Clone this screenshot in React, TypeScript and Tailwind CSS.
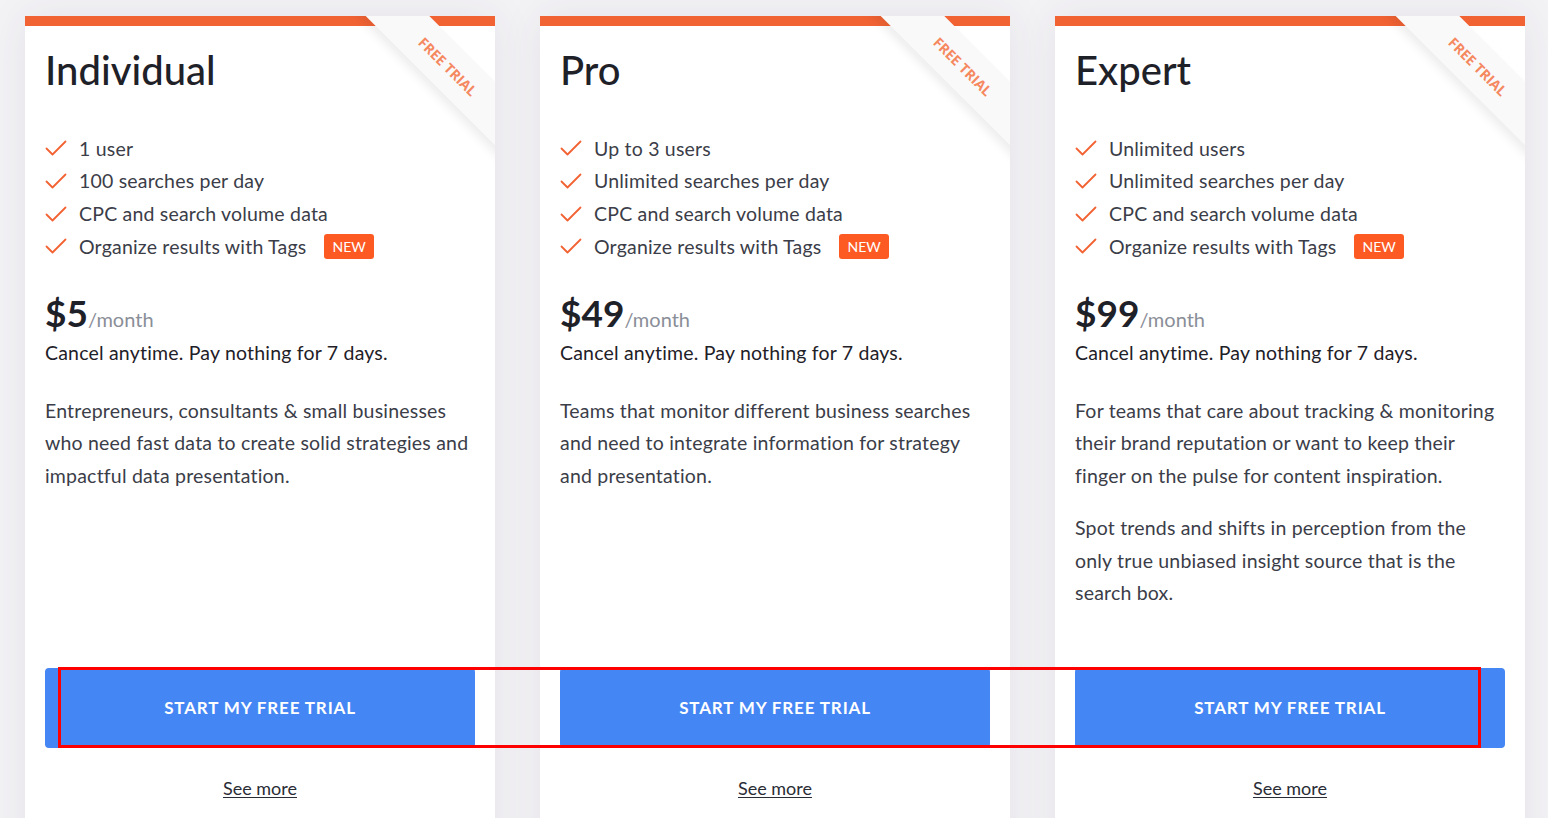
import React from 'react';

interface Plan {
  name: string;
  features: string[];
  price: string;
  paragraphs: string[];
}

const plans: Plan[] = [
  {
    name: 'Individual',
    features: ['1 user', '100 searches per day', 'CPC and search volume data', 'Organize results with Tags'],
    price: '$5',
    paragraphs: [
      'Entrepreneurs, consultants & small businesses who need fast data to create solid strategies and impactful data presentation.',
    ],
  },
  {
    name: 'Pro',
    features: ['Up to 3 users', 'Unlimited searches per day', 'CPC and search volume data', 'Organize results with Tags'],
    price: '$49',
    paragraphs: [
      'Teams that monitor different business searches and need to integrate information for strategy and presentation.',
    ],
  },
  {
    name: 'Expert',
    features: ['Unlimited users', 'Unlimited searches per day', 'CPC and search volume data', 'Organize results with Tags'],
    price: '$99',
    paragraphs: [
      'For teams that care about tracking & monitoring their brand reputation or want to keep their finger on the pulse for content inspiration.',
      'Spot trends and shifts in perception from the only true unbiased insight source that is the search box.',
    ],
  },
];

const Check = () => (
  <svg width="22" height="16" viewBox="0 0 22 16" fill="none" className="shrink-0">
    <path d="M1.5 8.5 L7.5 14.5 L20.5 1.5" stroke="#f26334" strokeWidth="1.8" strokeLinecap="round" strokeLinejoin="round" />
  </svg>
);

const PlanCard: React.FC<{ plan: Plan }> = ({ plan }) => (
  <div className="relative flex flex-col overflow-hidden bg-white shadow-[0_0_40px_rgba(60,50,80,0.08)]">
    <div className="h-[10px] bg-[#f26334]" />

    {/* corner ribbon */}
    <div className="absolute left-[303px] top-[28px] flex h-[45px] w-[240px] rotate-45 items-center justify-center bg-[#f9f9fa] shadow-[0_6px_10px_rgba(0,0,0,0.07)]">
      <span className="font-['Open_Sans',sans-serif] text-[14px] font-bold uppercase text-[#f5885f]">
        Free Trial
      </span>
    </div>

    <div className="flex flex-1 flex-col px-5 pb-16 font-['Lato',sans-serif]">
      <h2 className="mt-[20px] text-[40px] leading-[48px] font-medium text-[#1f2128]">{plan.name}</h2>

      <ul className="mt-[38px] flex flex-col">
        {plan.features.map((f, i) => (
          <li key={f} className="flex h-[32.7px] items-center gap-[12px] text-[19.5px] tracking-[0.01em] text-[#3b3d48]">
            <Check />
            <span>{f}</span>
            {i === 3 && (
              <span className="ml-[6px] rounded-[3px] bg-[#fd5a23] px-[8px] py-[3px] text-[14px] leading-[19px] tracking-normal text-white">
                NEW
              </span>
            )}
          </li>
        ))}
      </ul>

      <div className="mt-[28px] flex items-baseline">
        <span className="text-[37px] leading-[44px] font-bold text-[#1f2128]">{plan.price}</span>
        <span className="text-[20px] text-[#8a8e98]">/month</span>
      </div>
      <p className="mt-[3px] text-[19.5px] leading-[30px] tracking-[0.01em] text-[#1f2128]">
        Cancel anytime. Pay nothing for 7 days.
      </p>

      <div className="mt-[27px] flex flex-col gap-[20px]">
        {plan.paragraphs.map((p) => (
          <p key={p} className="text-[19.5px] leading-[32.5px] tracking-[0.01em] text-[#3b3d48]">
            {p}
          </p>
        ))}
      </div>

      <div className="mt-auto pt-[58px]">
        <button className="flex h-[80px] w-full items-center justify-center rounded-[4px] bg-[#4486f4] text-[17px] font-bold uppercase tracking-[0.05em] text-white">
          Start my free trial
        </button>
        <div className="mt-[27px] text-center">
          <a href="#" className="text-[18px] text-[#2a2c35] underline underline-offset-2">
            See more
          </a>
        </div>
      </div>
    </div>
  </div>
);

export default function App() {
  return (
    <div className="relative h-screen overflow-hidden bg-[#f3f2f5]">
      <div className="grid grid-cols-[470px_470px_470px] gap-[45px] pl-[25px] pt-[16px]">
        {plans.map((p) => (
          <PlanCard key={p.name} plan={p} />
        ))}
      </div>

      {/* annotation overlay */}
      <div className="pointer-events-none absolute left-[58px] top-[667px] h-[81px] w-[1423px] border-[3px] border-[#ff0000]" />
    </div>
  );
}
